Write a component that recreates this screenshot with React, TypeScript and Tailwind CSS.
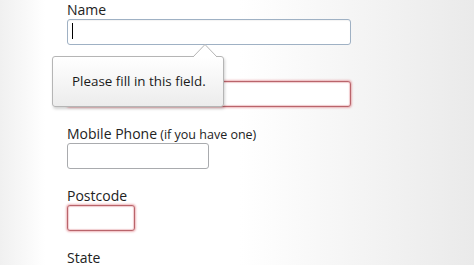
import React from 'react';

function Field({
  label,
  hint,
  width,
  state,
  caret,
}: {
  label: string;
  hint?: string;
  width: string;
  state: 'focus' | 'error' | 'idle';
  caret?: boolean;
}) {
  const box =
    state === 'focus'
      ? 'border-[#9fb1c4] shadow-[inset_0_1px_1px_rgba(0,0,0,0.05)]'
      : state === 'error'
        ? 'border-[#b9646b] shadow-[0_0_2px_1px_rgba(214,90,100,0.45),inset_0_0_1px_1px_rgba(214,110,118,0.35)]'
        : 'border-[#a9abae]';

  return (
    <div className="flex flex-col">
      <div className="h-[19px] text-[14px] leading-[19px] text-[#222]">
        {label}
        {hint && <span className="text-[12.5px]"> {hint}</span>}
      </div>
      <div className={`relative h-[26px] rounded-[3px] border bg-white ${width} ${box}`}>
        {caret && <span className="absolute left-[4px] top-[3px] h-[16px] w-[1px] bg-black" />}
      </div>
    </div>
  );
}

export default function App() {
  return (
    <div
      className="relative h-[265px] w-full overflow-hidden bg-[linear-gradient(to_right,#f0f0f0_0px,#ffffff_45px,#ffffff_240px,#eaeaea_100%)]"
      style={{ fontFamily: '"Open Sans", "Noto Sans", sans-serif' }}
    >
      <div className="flex flex-col gap-[17px] pl-[67px] pt-0">
        <Field label="Name" width="w-[284px]" state="focus" caret />
        {/* label of this field is hidden under the bubble */}
        <Field label="" width="w-[284px]" state="error" />
        <Field label="Mobile Phone" hint="(if you have one)" width="w-[142px]" state="idle" />
        <Field label="Postcode" width="w-[68px]" state="error" />
        <Field label="State" width="w-[142px]" state="idle" />
      </div>

      {/* validation bubble */}
      <div className="absolute left-[52px] top-[56px] flex h-[51px] w-[172px] items-center rounded-[3px] border border-[#b5b5b5] bg-[linear-gradient(to_bottom,#ffffff,#ececec)] pl-[19px] text-[13.4px] text-[#1a1a1a] shadow-[1px_2px_3px_rgba(0,0,0,0.18)]">
        Please fill in this field.
      </div>
      <svg className="absolute left-[190px] top-[43px]" width="32" height="15" viewBox="0 0 32 15">
        <path d="M3 14 L15 1.5 L27 14 Z" fill="#ffffff" />
        <path d="M3 14 L15 1.5 L27 14" fill="none" stroke="#b5b5b5" strokeWidth="1" />
      </svg>
    </div>
  );
}
